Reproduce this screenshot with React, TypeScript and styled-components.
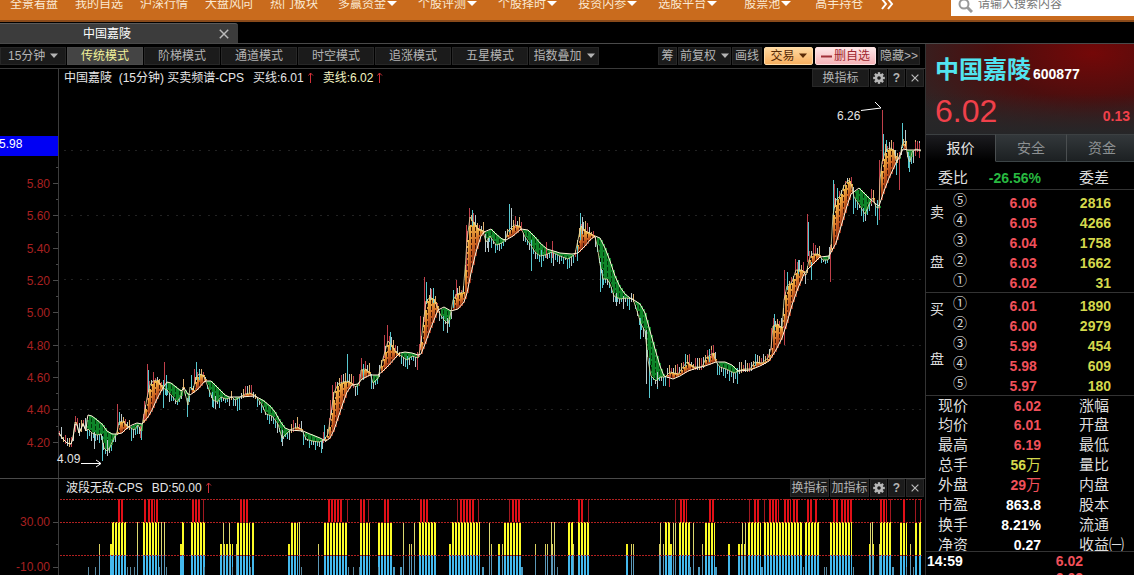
import React from "react";
import styled, { createGlobalStyle, css } from "styled-components";

const GlobalStyle = createGlobalStyle`
  * { box-sizing: border-box; }
  body {
    margin: 0;
    background: #000;
    overflow: hidden;
    font: 12px/16px "Liberation Sans", "Noto Sans CJK SC", sans-serif;
    color: #ccc;
  }
  button, select, input {
    font: inherit;
    color: inherit;
    margin: 0;
    padding: 0;
    border: 0;
    background: none;
  }
  svg { display: block; flex: none; }
  table { border-collapse: collapse; }
`;

const Page = styled.div`
  display: flex;
  flex-direction: column;
  height: 100vh;
  overflow: hidden;
`;

/* ---------- top menu ---------- */

const TopBar = styled.header`
  flex: none;
  display: flex;
  justify-content: space-between;
  height: 22px;
  background: #c96b1d;
  border-bottom: 2px solid #8a4a1a;
  overflow: hidden;
`;

const Menu = styled.nav`
  display: flex;
  align-items: flex-end;
  padding: 0 0 8px 10px;
  color: #fbe9d2;
`;

const MenuGroup = styled.div<{ $gap: number; $end: number }>`
  display: flex;
  align-items: flex-end;
  gap: ${(p) => p.$gap}px;
  margin-right: ${(p) => p.$end}px;
`;

const MenuLink = styled.a`
  display: flex;
  align-items: center;
  gap: 1px;
  color: inherit;
  text-decoration: none;
  white-space: nowrap;
`;

const SearchBox = styled.label`
  display: flex;
  align-items: flex-end;
  gap: 5px;
  width: 183px;
  height: 16px;
  padding: 0 0 3px 7px;
  background: #fff;
  color: #999;
`;

const SearchInput = styled.input`
  flex: 1;
  min-width: 0;
  height: 18px;
  outline: none;
  &::placeholder { color: #777; opacity: 1; }
`;

/* ---------- document tabs ---------- */

const TabStrip = styled.div`
  flex: none;
  display: flex;
  align-items: flex-end;
  height: 22px;
  border-bottom: 1px solid #4a4a4a;
`;

const DocTab = styled.div`
  display: flex;
  align-items: center;
  width: 238px;
  height: 20px;
  padding: 0 9px 0 83px;
  justify-content: space-between;
  background: #3c3c3c;
  border-top: 1px solid #5a5a5a;
  border-radius: 0 3px 0 0;
  color: #fff;
`;

const PlainButton = styled.button`
  display: flex;
  align-items: center;
  justify-content: center;
`;

/* ---------- body ---------- */

const Body = styled.div`
  flex: 1;
  display: flex;
  min-height: 0;
`;

const ChartColumn = styled.main`
  flex: 1;
  min-width: 0;
  display: flex;
  flex-direction: column;
`;

const Toolbar = styled.div`
  flex: none;
  display: flex;
  align-items: center;
  justify-content: space-between;
  height: 25px;
  padding-right: 5px;
  border-bottom: 1px solid #3a3a3a;
`;

const ToolGroup = styled.div<{ $gap?: number }>`
  display: flex;
  gap: ${(p) => p.$gap ?? 1}px;
`;

const toolFace = css`
  display: flex;
  align-items: center;
  justify-content: center;
  height: 18px;
  background: #1b1b1b;
  border: 1px solid #272727;
  color: #b4b4b4;
  white-space: nowrap;
`;

const ToolButton = styled.button<{ $width: number; $tone?: "active" | "gold" | "pink" }>`
  ${toolFace}
  gap: 4px;
  width: ${(p) => p.$width}px;
  ${(p) => p.$tone === "active" && css`
    background: #444;
    border-color: #4a4a4a;
    color: #f2f29a;
  `}
  ${(p) => p.$tone === "gold" && css`
    background: linear-gradient(#ffd9a0, #f8b060);
    border-color: #ffdca8;
    border-radius: 2px;
    color: #5a2c08;
  `}
  ${(p) => p.$tone === "pink" && css`
    background: linear-gradient(#fde6e6, #f6b4b8);
    border-color: #fde0e0;
    border-radius: 2px;
    color: #a02830;
    gap: 2px;
  `}
`;

const ToolSelect = styled.label<{ $width: number }>`
  ${toolFace}
  gap: 4px;
  width: ${(p) => p.$width}px;
`;

const BareSelect = styled.select`
  appearance: none;
  outline: none;
  height: 16px;
  line-height: 16px;
`;

const Pane = styled.section`
  flex: none;
  display: grid;
  grid-template-columns: 59px minmax(0, 1fr);
  border-bottom: 1px solid #4a4a4a;
`;

const AxisColumn = styled.div`
  border-right: 1px solid #3c3c3c;
`;

const PlotColumn = styled.div`
  min-width: 0;
`;

const PaneHeader = styled.div`
  display: flex;
  justify-content: space-between;
  height: 19px;
  padding: 0 1px 0 5px;
`;

const Legend = styled.div<{ $indent?: number }>`
  display: flex;
  align-items: center;
  gap: 9px;
  height: 17px;
  padding-left: ${(p) => p.$indent ?? 0}px;
  color: #e6e6e6;
  white-space: nowrap;
`;

const LegendItem = styled.span<{ $yellow?: boolean }>`
  display: flex;
  align-items: center;
  gap: 4px;
  color: ${(p) => (p.$yellow ? "#f4f4c0" : "inherit")};
`;

const PlotSvg = styled.svg`
  width: 100%;
  overflow: visible;
`;

/* ---------- quote panel ---------- */

const QuotePanel = styled.aside`
  flex: none;
  width: 209px;
  border-left: 1px solid #333;
  overflow: hidden;
`;

const QuoteHead = styled.div`
  height: 90px;
  padding: 12px 4px 0 9px;
  background:
    linear-gradient(180deg, rgba(34, 34, 36, 0) 55%, #262628 100%),
    radial-gradient(ellipse at 80% 10%, #740808 0%, #4c0e0e 42%, #2c2828 90%);
`;

const NameLine = styled.div`
  display: flex;
  align-items: flex-end;
  gap: 2px;
`;

const StockName = styled.h1`
  margin: 0;
  font-size: 24px;
  line-height: 28px;
  font-weight: 700;
  color: #52e4f0;
`;

const StockCode = styled.span`
  font-size: 14px;
  line-height: 20px;
  font-weight: 700;
  color: #fff;
`;

const PriceLine = styled.div`
  display: flex;
  justify-content: space-between;
  align-items: center;
  height: 38px;
  margin-top: 8px;
  color: #f0404a;
`;

const BigPrice = styled.span`
  font-size: 32px;
  line-height: 36px;
`;

const Change = styled.span`
  padding-top: 10px;
  font-size: 14px;
  font-weight: 700;
`;

const PanelTabs = styled.div`
  display: flex;
  height: 28px;
`;

const PanelTab = styled.button<{ $active?: boolean }>`
  flex: none;
  width: ${(p) => (p.$active ? 70 : 71)}px;
  font-size: 14px;
  line-height: 20px;
  border-right: 1px solid #4a4e50;
  border-top: 1px solid #3c4042;
  color: ${(p) => (p.$active ? "#e4e4e4" : "#8c9092")};
  background: ${(p) => (p.$active ? "linear-gradient(#1c1c20, #000)" : "linear-gradient(#33383b, #1c2022)")};
  border-bottom: 1px solid ${(p) => (p.$active ? "#000" : "#3c4446")};
`;

const DataTable = styled.table`
  width: 208px;
  table-layout: fixed;
  font-size: 14px;
`;

const RatioTable = styled(DataTable)`
  height: 28px;
  border-bottom: 1px solid #333;
  td, th { padding-top: 4px; }
`;

const StatsTable = styled(DataTable)`
  margin: 1px 0 -4px;
  tr { height: 20px; }
  tr:first-child { height: 18px; }
`;

const LabelCell = styled.th<{ $second?: boolean }>`
  padding: 0 0 0 ${(p) => (p.$second ? 38 : 12)}px;
  text-align: left;
  font-weight: 400;
  font-size: 15px;
  line-height: 18px;
  color: #ddd;
  white-space: nowrap;
`;

const ValueCell = styled.td<{ $color: string }>`
  padding: 0;
  text-align: right;
  font-weight: 700;
  line-height: 18px;
  color: ${(p) => p.$color};
  white-space: nowrap;
`;

const Unit = styled.span`
  font-weight: 400;
  font-size: 15px;
`;

const OrderSection = styled.div`
  display: flex;
  height: 103px;
  border-bottom: 1px solid #333;
`;

const SideLabel = styled.div<{ $top: number }>`
  width: 22px;
  display: flex;
  flex-direction: column;
  align-items: center;
  gap: 30px;
  padding-top: ${(p) => p.$top}px;
  font-size: 14px;
  line-height: 20px;
  color: #ddd;
`;

const OrderTable = styled.table`
  flex: 1;
  height: 100px;
  table-layout: fixed;
  margin-right: 23px;
  font-size: 14px;
`;

const LevelCell = styled.th`
  width: 24px;
  padding: 0;
  font-weight: 400;
  line-height: 20px;
  color: #ddd;
`;

const OrderValue = styled.td<{ $color: string }>`
  padding: 6px 0 0;
  text-align: right;
  font-weight: 700;
  line-height: 14px;
  color: ${(p) => p.$color};
`;

const Footer = styled.div`
  display: grid;
  grid-template-columns: 78px 78px;
  padding: 1px 0 0 1px;
  border-top: 1px solid #333;
  background: #000;
  position: relative;
  font-size: 14px;
  line-height: 17px;
  font-weight: 700;
  color: #fff;
`;

const Tick = styled.span`
  text-align: right;
  color: #f0505a;
`;

/* ---------- small drawings ---------- */

const Caret = ({ size = 8 }: { size?: number }) => (
  <svg width={size} height={size} viewBox="0 0 8 8" aria-hidden="true">
    <path d="M0 1.5h8L4 6z" fill="currentColor" />
  </svg>
);

const MenuCaret = () => (
  <svg width="10" height="16" viewBox="0 0 10 16" aria-hidden="true">
    <path d="M0 5h10L5 10z" fill="#fff" />
  </svg>
);

const CloseIcon = ({ size = 9 }: { size?: number }) => (
  <svg width={size} height={size} viewBox="0 0 9 9" aria-hidden="true">
    <path d="M.7.7l7.6 7.6M8.3.7L.7 8.3" stroke="#bbb" strokeWidth="1.3" fill="none" />
  </svg>
);

const GearIcon = () => (
  <svg width="12" height="12" viewBox="0 0 12 12" aria-hidden="true">
    <g fill="#b8b8b8">
      {[0, 45, 90, 135].map((a) => (
        <rect key={a} x="4.8" y="0.2" width="2.4" height="11.6" transform={`rotate(${a} 6 6)`} />
      ))}
      <circle cx="6" cy="6" r="4.2" />
    </g>
    <circle cx="6" cy="6" r="1.8" fill="#1b1b1b" />
  </svg>
);

const UpArrow = () => (
  <svg width="6" height="11" viewBox="0 0 6 11" aria-hidden="true">
    <path d="M2.5 11V1M.5 3.5L2.5 1l2.5 2.5" stroke="#d03038" fill="none" />
  </svg>
);

/* ---------- chart data ---------- */

type Point = [number, number];

const FAST: Point[] = [
  [59, 433], [63, 439], [67, 443], [71, 444], [73, 438], [75, 422], [77, 424], [79, 433], [81, 429], [83, 423], [86, 431], [88, 429],
  [92, 433], [97, 435], [101, 434], [104, 448], [107, 451], [110, 447], [113, 440], [117, 432], [119, 422], [123, 421], [127, 426],
  [131, 428], [134, 430], [138, 425], [141, 431], [143, 420], [147, 398], [150, 385], [153, 381], [157, 380], [160, 384], [163, 388],
  [167, 390], [171, 395], [177, 402], [181, 396], [183, 387], [186, 397], [188, 405], [190, 387], [193, 390], [196, 378], [199, 374],
  [203, 375], [205, 379], [209, 390], [213, 400], [217, 402], [221, 397], [226, 399], [232, 397], [235, 400], [240, 397], [245, 394],
  [250, 393], [256, 396], [262, 405], [266, 414], [272, 416], [278, 424], [282, 438], [286, 434], [290, 430], [297, 427], [302, 430],
  [306, 439], [312, 441], [319, 442], [324, 440], [328, 434], [331, 413], [334, 393], [338, 384], [343, 382], [348, 381], [352, 384],
  [356, 387], [360, 381], [361, 370], [365, 369], [370, 373], [373, 383], [378, 378], [380, 369], [384, 355], [388, 341], [391, 345],
  [396, 352], [400, 355], [407, 360], [412, 356], [418, 358], [420, 350], [423, 325], [426, 302], [430, 297], [434, 300], [437, 306],
  [440, 314], [444, 320], [448, 324], [451, 312], [453, 300], [457, 294], [463, 292], [465, 270], [467, 240], [470, 217], [474, 223],
  [478, 229], [483, 231], [486, 242], [490, 236], [496, 245], [502, 243], [506, 238], [508, 231], [514, 225], [520, 226], [525, 237],
  [530, 244], [535, 252], [540, 256], [545, 255], [552, 252], [560, 256], [568, 259], [575, 254], [578, 240], [581, 226], [585, 231],
  [590, 233], [595, 237], [597, 245], [600, 264], [603, 279], [607, 279], [610, 284], [614, 296], [620, 299], [626, 298], [633, 299],
  [637, 311], [641, 324], [645, 331], [648, 360], [651, 376], [656, 381], [660, 377], [665, 377], [670, 372], [678, 374], [683, 367],
  [687, 362], [693, 367], [702, 367], [706, 358], [713, 353], [716, 362], [720, 367], [726, 369], [734, 373], [738, 371], [744, 369],
  [750, 369], [755, 362], [762, 363], [768, 358], [771, 348], [773, 326], [777, 324], [782, 328], [784, 300], [787, 286], [792, 282],
  [796, 270], [802, 270], [806, 275], [809, 260], [812, 254], [818, 254], [823, 260], [828, 260], [831, 248], [833, 215], [836, 200],
  [840, 196], [844, 186], [848, 180], [851, 184], [854, 197], [860, 206], [865, 214], [870, 202], [873, 198], [876, 207], [879, 208],
  [880, 180], [882, 162], [886, 150], [890, 148], [894, 150], [896, 161], [900, 158], [902, 145], [905, 141], [908, 158], [910, 162],
  [912, 152], [916, 149], [921, 151],
];

const SLOW: Point[] = [
  [59, 433], [63, 439], [67, 443], [71, 444], [73, 438], [75, 424], [77, 425], [79, 433], [81, 429], [83, 424], [86, 431], [87, 420],
  [88, 415], [92, 416], [97, 420], [102, 424], [107, 431], [112, 434], [117, 434], [122, 433], [127, 428], [132, 425], [137, 423],
  [142, 424], [148, 417], [152, 410], [156, 401], [160, 393], [163, 388], [167, 382], [171, 383], [176, 387], [181, 391], [184, 388],
  [188, 394], [190, 395], [197, 390], [205, 381], [211, 381], [216, 386], [220, 390], [225, 395], [229, 397], [240, 397], [255, 396],
  [264, 401], [270, 406], [275, 412], [280, 421], [285, 428], [290, 430], [303, 431], [310, 434], [320, 438], [326, 441], [330, 438],
  [334, 430], [338, 418], [343, 403], [347, 392], [352, 385], [358, 384], [362, 379], [370, 375], [378, 375], [383, 371], [388, 366],
  [396, 357], [400, 353], [405, 352], [412, 353], [418, 355], [421, 354], [425, 344], [430, 330], [434, 320], [438, 310], [444, 307],
  [451, 311], [458, 309], [464, 302], [467, 293], [471, 273], [476, 252], [481, 236], [484, 232], [491, 229], [496, 234], [502, 239],
  [506, 240], [513, 236], [521, 229], [528, 230], [535, 237], [540, 243], [547, 249], [560, 253], [572, 254], [578, 253], [585, 246],
  [590, 240], [595, 236], [600, 238], [605, 248], [610, 261], [615, 276], [620, 287], [625, 294], [630, 298], [634, 300], [640, 304],
  [645, 313], [650, 331], [655, 349], [660, 366], [664, 376], [673, 379], [680, 376], [688, 371], [697, 368], [705, 366], [716, 362],
  [725, 362], [732, 365], [738, 371], [750, 370], [760, 366], [769, 361], [776, 350], [782, 338], [786, 326], [792, 305], [798, 288],
  [804, 274], [808, 269], [813, 264], [820, 257], [829, 256], [836, 243], [842, 223], [847, 206], [851, 194], [859, 188], [865, 194],
  [870, 199], [876, 204], [879, 206], [884, 191], [889, 178], [896, 163], [903, 149], [908, 150], [921, 150],
];

const RED = "#c0404a";
const CYAN = "#58c8d0";
const PALE = "#b8c8cc";

const WICKS: [number, number, number, string][] = [
  [75, 416, 432, RED], [94, 432, 449, PALE], [102, 436, 461, CYAN], [107, 440, 456, PALE], [117, 404, 430, RED], [119, 412, 425, CYAN],
  [140, 426, 438, RED], [144, 401, 420, RED], [147, 364, 400, RED], [148, 370, 392, CYAN], [153, 372, 384, RED], [164, 362, 386, RED],
  [163, 380, 408, CYAN], [166, 375, 396, CYAN], [187, 398, 417, CYAN], [191, 375, 390, CYAN], [194, 369, 384, RED], [196, 362, 380, CYAN],
  [199, 370, 380, CYAN], [212, 392, 407, CYAN], [215, 396, 409, PALE], [245, 388, 396, RED], [282, 430, 446, PALE], [322, 440, 449, PALE],
  [324, 425, 440, CYAN], [330, 400, 420, RED], [332, 385, 410, RED], [347, 354, 382, CYAN], [361, 358, 378, RED], [363, 364, 380, CYAN],
  [371, 374, 389, CYAN], [387, 325, 345, RED], [390, 332, 350, CYAN], [384, 335, 358, RED], [407, 356, 369, CYAN], [417, 352, 370, RED],
  [420, 316, 350, RED], [424, 277, 322, RED], [426, 282, 304, CYAN], [430, 288, 300, PALE], [433, 288, 303, CYAN], [443, 316, 331, CYAN],
  [447, 318, 332, PALE], [453, 290, 308, CYAN], [456, 280, 298, RED], [466, 225, 270, RED], [469, 208, 226, RED], [472, 210, 226, CYAN],
  [485, 234, 252, PALE], [488, 238, 252, PALE], [509, 204, 232, CYAN], [511, 208, 230, PALE], [515, 217, 228, RED], [531, 240, 271, CYAN],
  [541, 250, 267, CYAN], [546, 242, 258, RED], [552, 241, 258, RED], [577, 246, 261, CYAN], [580, 213, 240, CYAN], [582, 217, 234, PALE],
  [600, 262, 292, CYAN], [602, 270, 288, CYAN], [616, 293, 306, PALE], [623, 296, 309, PALE], [640, 318, 339, CYAN], [646, 330, 384, PALE],
  [649, 358, 398, CYAN], [657, 372, 387, PALE], [669, 374, 387, RED], [685, 354, 366, CYAN], [709, 349, 362, CYAN], [711, 350, 358, RED],
  [737, 368, 377, CYAN], [755, 354, 366, CYAN], [771, 328, 350, RED], [774, 314, 330, CYAN], [784, 270, 300, RED], [787, 272, 290, CYAN],
  [784, 326, 345, RED], [795, 259, 274, RED], [798, 260, 274, CYAN], [807, 214, 262, RED], [808, 222, 256, CYAN], [811, 262, 280, CYAN],
  [813, 243, 256, RED], [830, 245, 282, RED], [833, 180, 215, CYAN], [834, 184, 208, RED], [837, 188, 200, CYAN], [853, 192, 214, CYAN],
  [863, 208, 222, CYAN], [871, 189, 204, RED], [877, 200, 225, CYAN], [879, 160, 220, RED], [882, 110, 164, RED], [883, 134, 158, CYAN],
  [886, 140, 152, CYAN], [896, 160, 175, CYAN], [899, 152, 190, RED], [902, 123, 148, CYAN], [905, 130, 146, PALE], [908, 152, 168, CYAN],
  [909, 156, 172, CYAN], [915, 142, 156, RED], [919, 143, 158, RED],
];

const valueAt = (line: Point[], x: number) => {
  const i = line.findIndex((p) => p[0] >= x);
  if (i <= 0) return line[0][1];
  const [x0, y0] = line[i - 1];
  const [x1, y1] = line[i];
  return y0 + ((y1 - y0) * (x - x0)) / (x1 - x0);
};

// Repeatable noise so that the small wicks do not move between renders.
const noise = (n: number) => {
  const v = Math.sin(n * 12.9898) * 43758.5453;
  return v - Math.floor(v);
};

const columns = Array.from({ length: 431 }, (_, i) => {
  const x = 59 + i * 2;
  return { x, fast: Math.round(valueAt(FAST, x)), slow: Math.round(valueAt(SLOW, x)) };
});

const toPath = (line: Point[]) => "M" + line.map((p) => `${p[0]} ${p[1]}`).join("L");

// Spans of the lower indicator: first x, last x.
type Span = [number, number];
const LOW: Span[] = [
  [88, 88], [95, 95], [127, 127], [130, 130], [134, 134], [159, 159], [166, 166], [204, 204], [232, 232], [250, 250], [301, 301], [348, 348],
  [353, 353], [359, 359], [378, 378], [393, 394], [400, 401], [482, 483], [521, 522], [557, 557], [689, 690], [698, 699], [715, 716],
  [761, 762], [803, 803], [824, 824], [826, 826], [853, 853], [892, 893], [906, 906], [913, 913],
];
const MID: Span[] = [
  [99, 99], [110, 112], [180, 181], [220, 232], [236, 236], [288, 290], [318, 318], [409, 409], [411, 411], [449, 451], [491, 491],
  [498, 499], [502, 502], [535, 535], [545, 545], [547, 547], [552, 552], [573, 573], [626, 627], [631, 631], [633, 633], [659, 659],
  [663, 663], [670, 671], [702, 702], [728, 729], [738, 746], [869, 874], [879, 879], [910, 910],
];
const HIGH: Span[] = [
  [112, 126], [137, 137], [143, 158], [161, 161], [164, 164], [182, 184], [191, 204], [223, 223], [229, 229], [237, 249], [252, 254],
  [291, 297], [299, 299], [324, 347], [360, 369], [378, 392], [403, 403], [414, 414], [419, 435], [452, 479], [489, 489], [504, 520],
  [551, 551], [554, 554], [568, 572], [578, 589], [660, 660], [665, 669], [673, 673], [675, 675], [679, 689], [693, 693], [705, 714],
  [742, 742], [745, 745], [748, 760], [764, 802], [805, 806], [808, 818], [830, 851], [870, 870], [872, 872], [880, 890], [900, 906],
  [915, 917], [919, 921],
];
const PEAK: Span[] = [
  [118, 122], [144, 146], [148, 154], [156, 157], [192, 200], [203, 203], [240, 247], [328, 342], [347, 347], [360, 365], [368, 368],
  [384, 389], [420, 428], [457, 457], [460, 473], [478, 478], [509, 509], [512, 520], [578, 583], [588, 588], [675, 675], [680, 686],
  [709, 714], [749, 749], [754, 759], [764, 764], [769, 778], [784, 790], [793, 798], [807, 811], [815, 817], [833, 838], [841, 851],
  [880, 886], [890, 890], [903, 905], [915, 915], [920, 920],
];

const Bars = ({ spans, top, bottom, bright, dim }: { spans: Span[]; top: number; bottom: number; bright: string; dim: string }) => (
  <>
    {spans.map(([from, to]) => {
      const bars = [];
      for (let x = from; x <= to; x += 3) {
        bars.push(
          <rect
            key={`${from}-${x}`}
            x={x}
            y={top}
            width={Math.min(2, to - x + 1)}
            height={bottom - top}
            fill={to === from ? dim : bright}
          />
        );
      }
      return bars;
    })}
  </>
);

const PRICE_LABELS: [string, number][] = [
  ["5.80", 183], ["5.60", 215], ["5.40", 248], ["5.20", 280], ["5.00", 312], ["4.80", 345], ["4.60", 377], ["4.40", 409], ["4.20", 442],
];

const axisText = { fill: "#a82020", fontSize: 12, textAnchor: "end" as const };

const PriceAxis = () => (
  <svg width="58" height="409" viewBox="0 69 58 409">
    <rect x="0" y="136" width="58" height="20" fill="#0000f4" />
    <text x="-1" y="148" fill="#fff" fontSize="12">5.98</text>
    {PRICE_LABELS.map(([label, y]) => (
      <g key={label}>
        <text x="50" y={y + 5} {...axisText}>{label}</text>
        <path d={`M53 ${y + 0.5}h5M56 ${y - 15.5}h2`} stroke="#4a4a4a" />
      </g>
    ))}
  </svg>
);

const PriceChart = () => (
  <PlotSvg height="390" viewBox="59 88 866 390" preserveAspectRatio="xMinYMin meet" role="img" aria-label="15分钟K线图">
    <defs>
      <linearGradient id="rise" x1="0" y1="0" x2="0" y2="1">
        <stop offset="0" stopColor="#f4bc48" />
        <stop offset="0.5" stopColor="#d06824" />
        <stop offset="1" stopColor="#8c2410" />
      </linearGradient>
    </defs>
    {[150, 215, 279, 345, 409].map((y) => (
      <path key={y} d={`M64 ${y + 0.5}H921`} stroke="#222" strokeDasharray="2 5 2 7" />
    ))}
    <g shapeRendering="crispEdges">
      {columns.map(({ x, fast, slow }, i) => {
        const up = fast <= slow;
        const length = 2 + Math.round(noise(i) * 8);
        const tint = up ? [RED, PALE, "#e0b070"][i % 3] : [CYAN, PALE, CYAN][i % 3];
        return (
          <rect key={x} x={x} y={up ? fast - length : fast} width="1" height={length + (Math.abs(fast - slow) < 3 ? 3 : 0)} fill={tint} />
        );
      })}
      {columns.map(({ x, fast, slow }, i) => {
        const gap = Math.abs(fast - slow);
        if (gap < 2) return null;
        return (
          <g key={x}>
            <rect x={x} y={Math.min(fast, slow)} width="2" height={gap} fill={fast < slow ? "url(#rise)" : "#0e8428"} />
            {i % 2 === 0 && (
              <path d={`M${x + 0.5} ${Math.min(fast, slow) + 2}v${gap - 2}`} stroke={fast < slow ? "#3a1206" : "#03340a"} strokeDasharray="4 2" />
            )}
          </g>
        );
      })}
      {WICKS.map(([x, top, bottom, color]) => (
        <rect key={`${x}-${top}`} x={x} y={top} width="1" height={bottom - top} fill={color} />
      ))}
    </g>
    <path d={toPath(FAST)} fill="none" stroke="#e8e4a8" strokeWidth="1" strokeOpacity="0.8" />
    <path d={toPath(SLOW)} fill="none" stroke="#fff4d8" strokeWidth="1" />
    <text x="837" y="120" fill="#e4e4e4" fontSize="12">6.26</text>
    <path d="M861 110.500L881 108M875 102L881 108" stroke="#fff" fill="none" />
    <text x="57" y="463" fill="#e4e4e4" fontSize="12">4.09</text>
    <path d="M81 463.500H101M96 460L101 463.500L96 467" stroke="#fff" fill="none" />
  </PlotSvg>
);

const WaveAxis = () => (
  <svg width="58" height="96" viewBox="0 479 58 96">
    <text x="50" y="526" {...axisText}>30.00</text>
    <text x="50" y="571" {...axisText}>-10.00</text>
    <path d="M53 522.500h5M53 567.500h5M56 544.500h2" stroke="#4a4a4a" />
  </svg>
);

const WaveChart = () => (
  <PlotSvg height="77" viewBox="59 498 866 77" preserveAspectRatio="xMinYMin meet" role="img" aria-label="波段无敌指标">
    <g shapeRendering="crispEdges">
      <Bars spans={PEAK} top={499} bottom={522} bright="#e01018" dim="#a01820" />
      <Bars spans={MID} top={544} bottom={555} bright="#f4f020" dim="#d8d060" />
      <Bars spans={HIGH} top={522} bottom={555} bright="#fcfc28" dim="#dcd870" />
      <Bars spans={[...MID, ...HIGH]} top={555} bottom={575} bright="#44b8ec" dim="#5c98b8" />
      <Bars spans={LOW} top={567} bottom={575} bright="#4a9cc4" dim="#5888a0" />
      {[499, 522, 555].map((y) => (
        <path key={y} d={`M60 ${y + 0.5}H922`} stroke="#b02020" strokeDasharray="2 1" />
      ))}
    </g>
  </PlotSvg>
);

/* ---------- content ---------- */

const PLAIN_MENU = ["全景看盘", "我的自选", "沪深行情", "大盘风向", "热门板块"];
const DROP_MENU = ["多赢资金", "个股评测", "个股择时", "投资内参", "选股平台"];
const MODES = ["传统模式", "阶梯模式", "通道模式", "时空模式", "追涨模式", "五星模式"];

const SELL = [["⑤", "6.06", "2816"], ["④", "6.05", "4266"], ["③", "6.04", "1758"], ["②", "6.03", "1662"], ["①", "6.02", "31"]];
const BUY = [["①", "6.01", "1890"], ["②", "6.00", "2979"], ["③", "5.99", "454"], ["④", "5.98", "609"], ["⑤", "5.97", "180"]];

const PRICE_RED = "#f0505a";
const VOLUME = "#d4d84c";

const STATS: [string, string, string, string, string?][] = [
  ["现价", "6.02", PRICE_RED, "涨幅"],
  ["均价", "6.01", PRICE_RED, "开盘"],
  ["最高", "6.19", PRICE_RED, "最低"],
  ["总手", "56", VOLUME, "量比", "万"],
  ["外盘", "29", PRICE_RED, "内盘", "万"],
  ["市盈", "863.8", "#fff", "股本"],
  ["换手", "8.21%", "#fff", "流通"],
  ["净资", "0.27", "#fff", "收益㈠"],
];

const PaneTools = ({ children }: { children: React.ReactNode }) => (
  <ToolGroup>
    {children}
    <ToolButton $width={17} aria-label="设置"><GearIcon /></ToolButton>
    <ToolButton $width={17}><b>?</b></ToolButton>
    <ToolButton $width={18} aria-label="关闭"><CloseIcon size={8} /></ToolButton>
  </ToolGroup>
);

const Dropdown = ({ label, value, width }: { label: string; value: string; width: number }) => (
  <ToolSelect $width={width}>
    <BareSelect aria-label={label} defaultValue={value}>
      <option>{value}</option>
    </BareSelect>
    <Caret />
  </ToolSelect>
);

const Orders = ({ side, top, rows }: { side: string; top: number; rows: string[][] }) => (
  <OrderSection>
    <SideLabel $top={top}>
      <span>{side}</span>
      <span>盘</span>
    </SideLabel>
    <OrderTable>
      <tbody>
        {rows.map(([level, price, volume]) => (
          <tr key={level}>
            <LevelCell scope="row">{level}</LevelCell>
            <OrderValue $color={PRICE_RED}>{price}</OrderValue>
            <OrderValue $color={VOLUME}>{volume}</OrderValue>
          </tr>
        ))}
      </tbody>
    </OrderTable>
  </OrderSection>
);

const LabelCol = styled.col`
  width: 42px;
`;

const ValueCol = styled.col`
  width: 73px;
`;

const PanelColumns = () => (
  <colgroup>
    <LabelCol />
    <ValueCol />
    <col />
  </colgroup>
);

export default function App() {
  return (
    <Page>
      <GlobalStyle />
      <TopBar>
        <Menu>
          <MenuGroup $gap={17} $end={20}>
            {PLAIN_MENU.map((item) => <MenuLink key={item} href="#">{item}</MenuLink>)}
          </MenuGroup>
          <MenuGroup $gap={21} $end={27}>
            {DROP_MENU.map((item) => <MenuLink key={item} href="#">{item}<MenuCaret /></MenuLink>)}
          </MenuGroup>
          <MenuGroup $gap={24} $end={18}>
            <MenuLink href="#">股票池<MenuCaret /></MenuLink>
            <MenuLink href="#">高手持仓</MenuLink>
          </MenuGroup>
          <PlainButton aria-label="更多">
            <svg width="13" height="16" viewBox="0 0 13 16">
              <path d="M1 3l4 5-4 5M7 3l4 5-4 5" stroke="#fff" strokeWidth="2" fill="none" />
            </svg>
          </PlainButton>
        </Menu>
        <SearchBox>
          <svg width="15" height="15" viewBox="0 0 15 15" aria-hidden="true">
            <circle cx="6" cy="6" r="4.500" fill="none" stroke="#999" strokeWidth="2" />
            <path d="M9.500 9.500L14 14" stroke="#999" strokeWidth="3" />
          </svg>
          <SearchInput type="text" placeholder="请输入搜索内容" aria-label="搜索" />
        </SearchBox>
      </TopBar>
      <TabStrip>
        <DocTab>
          中国嘉陵
          <PlainButton aria-label="关闭"><CloseIcon size={10} /></PlainButton>
        </DocTab>
      </TabStrip>
      <Body>
        <ChartColumn>
          <Toolbar>
            <ToolGroup>
              <Dropdown label="周期" value="15分钟" width={66} />
              {MODES.map((mode, i) => (
                <ToolButton key={mode} $width={76} $tone={i === 0 ? "active" : undefined}>{mode}</ToolButton>
              ))}
              <Dropdown label="叠加" value="指数叠加" width={70} />
            </ToolGroup>
            <ToolGroup $gap={2}>
              <ToolGroup>
                <ToolButton $width={19}>筹</ToolButton>
                <Dropdown label="复权" value="前复权" width={53} />
                <ToolButton $width={30}>画线</ToolButton>
              </ToolGroup>
              <ToolButton $width={49} $tone="gold" aria-haspopup="menu">交易<Caret /></ToolButton>
              <ToolButton $width={61} $tone="pink">
                <svg width="11" height="3" viewBox="0 0 11 3" aria-hidden="true">
                  <rect y="0.500" width="11" height="2" fill="#a03038" />
                </svg>
                删自选
              </ToolButton>
              <ToolButton $width={42}>隐藏&gt;&gt;</ToolButton>
            </ToolGroup>
          </Toolbar>
          <Pane>
            <AxisColumn><PriceAxis /></AxisColumn>
            <PlotColumn>
              <PaneHeader>
                <Legend>
                  <LegendItem>中国嘉陵&nbsp; (15分钟) 买卖频谱-CPS</LegendItem>
                  <LegendItem>买线:6.01<UpArrow /></LegendItem>
                  <LegendItem $yellow>卖线:6.02<UpArrow /></LegendItem>
                </Legend>
                <PaneTools>
                  <ToolButton $width={57}>换指标</ToolButton>
                </PaneTools>
              </PaneHeader>
              <PriceChart />
            </PlotColumn>
          </Pane>
          <Pane>
            <AxisColumn><WaveAxis /></AxisColumn>
            <PlotColumn>
              <PaneHeader>
                <Legend $indent={2}>
                  <LegendItem>波段无敌-CPS</LegendItem>
                  <LegendItem>BD:50.00<UpArrow /></LegendItem>
                </Legend>
                <PaneTools>
                  <ToolButton $width={39}>换指标</ToolButton>
                  <ToolButton $width={39}>加指标</ToolButton>
                </PaneTools>
              </PaneHeader>
              <WaveChart />
            </PlotColumn>
          </Pane>
        </ChartColumn>
        <QuotePanel>
          <QuoteHead>
            <NameLine>
              <StockName>中国嘉陵</StockName>
              <StockCode>600877</StockCode>
            </NameLine>
            <PriceLine>
              <BigPrice>6.02</BigPrice>
              <Change>0.13</Change>
            </PriceLine>
          </QuoteHead>
          <PanelTabs>
            <PanelTab $active>报价</PanelTab>
            <PanelTab>安全</PanelTab>
            <PanelTab>资金</PanelTab>
          </PanelTabs>
          <RatioTable>
            <PanelColumns />
            <tbody>
              <tr>
                <LabelCell scope="row">委比</LabelCell>
                <ValueCell $color="#28b840">-26.56%</ValueCell>
                <LabelCell $second>委差</LabelCell>
              </tr>
            </tbody>
          </RatioTable>
          <Orders side="卖" top={12} rows={SELL} />
          <Orders side="买" top={6} rows={BUY} />
          <StatsTable>
            <PanelColumns />
            <tbody>
              {STATS.map(([label, value, color, second, unit]) => (
                <tr key={label}>
                  <LabelCell scope="row">{label}</LabelCell>
                  <ValueCell $color={color}>{value}{unit && <Unit>{unit}</Unit>}</ValueCell>
                  <LabelCell $second>{second}</LabelCell>
                </tr>
              ))}
            </tbody>
          </StatsTable>
          <Footer>
            <span>14:59</span>
            <Tick>6.02</Tick>
            <span />
            <Tick>6.02</Tick>
          </Footer>
        </QuotePanel>
      </Body>
    </Page>
  );
}
